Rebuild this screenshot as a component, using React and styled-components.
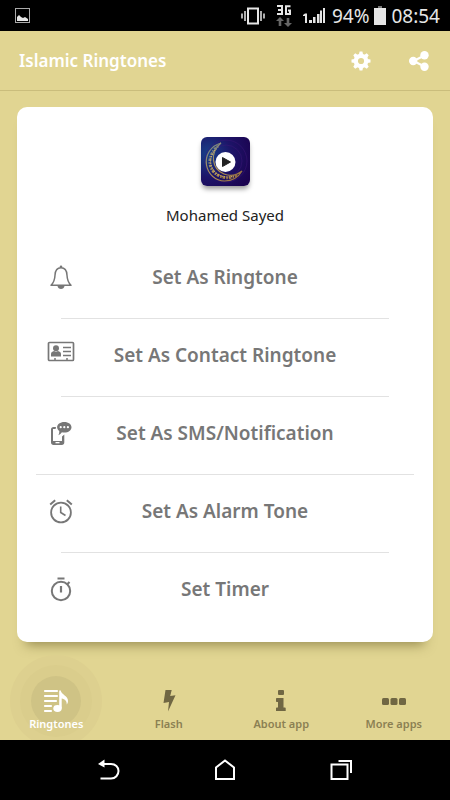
import React, { Component } from 'react';
import styled, { createGlobalStyle } from 'styled-components';

const GlobalStyle = createGlobalStyle`
    * {
        box-sizing: border-box;
    }
    body {
        margin: 0;
        background: #e1d592;
        font-family: "Noto Sans", "Open Sans", sans-serif;
    }
    button {
        border: 0;
        padding: 0;
        background: none;
        font-family: inherit;
        cursor: pointer;
    }
    svg {
        display: block;
        flex: none;
    }
`;

const Page = styled.div`
    display: flex;
    flex-direction: column;
    min-height: 100vh;
    background: #e1d592;
`;

const StatusBar = styled.div`
    display: flex;
    align-items: center;
    justify-content: space-between;
    height: 31px;
    padding: 0 10px 0 15px;
    background: #000;
    color: #e6e6e6;
    font-size: 19px;
    line-height: 30px;
`;

const StatusGroup = styled.div`
    display: flex;
    align-items: center;
    gap: ${props => props.$gap}px;
`;

const Header = styled.header`
    display: flex;
    align-items: center;
    justify-content: space-between;
    height: 60px;
    padding: 0 21px 0 19px;
    border-bottom: 1px solid #cabd7c;
    color: #fff;
    h1 {
        margin: 0;
        font-size: 17px;
        line-height: 24px;
        font-weight: 600;
    }
`;

const Actions = styled.div`
    display: flex;
    gap: 38px;
    button {
        color: #fff;
    }
`;

const Card = styled.main`
    display: flex;
    flex-direction: column;
    align-items: center;
    margin: 16px 17px 0;
    padding: 30px 0 12px;
    border-radius: 10px;
    background: #fff;
    box-shadow: 0 12px 12px -9px rgba(80, 70, 20, 0.5);
`;

const PlayButton = styled.button`
    border-radius: 6px;
    box-shadow: 0 4px 5px -1px rgba(0, 0, 0, 0.4);
`;

const Author = styled.p`
    margin: 16px 0 13px;
    color: #222;
    font-size: 15px;
    line-height: 26px;
`;

const List = styled.ul`
    width: 100%;
    margin: 0;
    padding: 0;
    list-style: none;
`;

const Divider = styled.div`
    height: 1px;
    margin: 0 ${props => props.$wide ? 19 : 44}px;
    background: #e2e2e2;
`;

const Option = styled.button`
    display: grid;
    grid-template-columns: 88px 1fr 88px;
    align-items: center;
    justify-items: center;
    width: 100%;
    height: 77px;
    padding-bottom: 5px;
    color: #777;
    font-size: 19px;
    line-height: 28px;
    font-weight: 600;
    white-space: nowrap;
`;

const Tabs = styled.nav`
    position: relative;
    display: grid;
    grid-template-columns: repeat(4, 1fr);
    align-items: end;
    flex: 1;
    min-height: 98px;
    overflow: hidden;
`;

const Tab = styled.button`
    position: relative;
    display: flex;
    flex-direction: column;
    align-items: center;
    height: 52px;
    color: ${props => props.$selected ? '#fff' : '#8b8053'};
    font-size: 11px;
    line-height: 16px;
    font-weight: 600;
    svg {
        position: relative;
        color: ${props => props.$selected ? '#fff' : '#706743'};
    }
    span {
        position: relative;
        margin-top: 2px;
    }
`;

const Ripple = styled.i`
    position: absolute;
    top: 13px;
    left: 50%;
    width: 50px;
    height: 50px;
    margin: -25px 0 0 -25px;
    border-radius: 50%;
    background: #cfc385;
    box-shadow: 0 0 0 11px #dacd8c, 0 0 0 21px #ddd08f;
`;

const SystemBar = styled.div`
    display: flex;
    align-items: center;
    justify-content: center;
    gap: 94px;
    height: 60px;
    background: #000;
    button {
        color: #fff;
    }
`;

const GearIcon = () => (
    <svg width="20" height="20" viewBox="0 0 20 20" fill="currentColor">
        <circle cx="10" cy="10" r="5.200" fill="none" stroke="currentColor" strokeWidth="4.200" />
        {[0, 45, 90, 135].map(angle => (
            <g key={angle} transform={`rotate(${angle} 10 10)`}>
                <path d="M8.600 0.500h2.800l.7 3h-4.200zM7.900 16.500h4.200l-.7 3H8.600z" />
            </g>
        ))}
    </svg>
);

const BellIcon = () => (
    <svg width="28" height="28" viewBox="0 0 28 28" fill="none" stroke="currentColor" strokeWidth="1.5">
        <path d="M4 22.2c3-2.8 3.8-5.5 4-10C8.200 7.500 10.300 4.800 14 4.800s5.800 2.700 6 7.400c.2 4.500 1 7.200 4 10z" strokeLinejoin="round" />
        <circle cx="14" cy="3.700" r="1.300" fill="currentColor" stroke="none" />
        <path d="M10.500 23h7c-.3 2-1.700 3-3.500 3s-3.200-1-3.500-3z" fill="currentColor" stroke="none" />
    </svg>
);

const ContactIcon = () => (
    <svg width="28" height="28" viewBox="0 0 28 28" fill="none" stroke="currentColor">
        <rect x="1.500" y="1.500" width="25" height="18" rx="1" strokeWidth="1.700" />
        <circle cx="9" cy="7.200" r="3" fill="currentColor" stroke="none" />
        <path d="M4 15.500v-2.500c0-1.800 1.500-2.600 3-3l2 .8 2-.8c1.500.4 3 1.200 3 3v2.500z" fill="currentColor" stroke="none" />
        <path d="M16 6.500h8M16 10.500h8M16 14.500h8" strokeWidth="1.500" />
        <path d="M8 17v2M20 17v2" strokeWidth="1.500" />
    </svg>
);

const SmsIcon = () => (
    <svg width="28" height="28" viewBox="0 0 28 28" fill="currentColor">
        <path d="M9 8H6.500C5 8 4 9 4 10.500v13C4 25 5 26 6.500 26h8.300c1.500 0 2.500-1 2.500-2.500v-8l-2.300 2V22H6V10h2.600z" />
        <rect x="8.500" y="23" width="4" height="1.300" fill="#fff" />
        <path d="M17.300 3c4.200 0 7.200 2.400 7.200 5.300s-3 5.300-7.200 5.300c-.9 0-1.700-.1-2.400-.3-.9 1.300-2 2.300-3.500 3 .7-1.300 1-2.600.9-4.200-1.300-1-2.200-2.300-2.200-3.800C10.100 5.400 13.100 3 17.300 3z" />
        <g fill="#fff">
            <circle cx="13.700" cy="8.200" r="1.100" />
            <circle cx="17.300" cy="8.200" r="1.100" />
            <circle cx="20.900" cy="8.200" r="1.100" />
        </g>
    </svg>
);

const AlarmIcon = () => (
    <svg width="28" height="28" viewBox="0 0 28 28" fill="none" stroke="currentColor">
        <circle cx="14" cy="15.500" r="9.900" strokeWidth="1.800" />
        <path d="M13.700 9.500v6l4.800 3" strokeWidth="1.600" />
        <path d="M3.200 7.500l5-4.200M24.800 7.500l-5-4.200" strokeWidth="2" />
    </svg>
);

const TimerIcon = () => (
    <svg width="28" height="28" viewBox="0 0 28 28" fill="none" stroke="currentColor">
        <circle cx="14" cy="16" r="9.200" strokeWidth="2" />
        <path d="M10.500 3.500h7" strokeWidth="2" />
        <path d="M14 11v6.500" strokeWidth="2.200" />
        <path d="M20 9.500l2.500-2.500" strokeWidth="2.200" />
    </svg>
);

const Artwork = () => (
    <svg width="49" height="49" viewBox="0 0 49 49">
        <defs>
            <radialGradient id="night" cx="0.150" cy="0.350" r="0.950">
                <stop offset="0" stopColor="#17418a" />
                <stop offset="0.500" stopColor="#1d1468" />
                <stop offset="1" stopColor="#1b0350" />
            </radialGradient>
            <linearGradient id="gold" x1="0" y1="0" x2="1" y2="1">
                <stop offset="0" stopColor="#6d8090" />
                <stop offset="0.500" stopColor="#b59650" />
                <stop offset="1" stopColor="#8d6642" />
            </linearGradient>
        </defs>
        <rect width="49" height="49" rx="6" fill="url(#night)" />
        <g fill="none" stroke="#3b1578" strokeOpacity="0.500">
            <circle cx="25" cy="24" r="16" />
            <circle cx="25" cy="24" r="21" />
        </g>
        <path d="M20 6C9 9 4 19 5.500 28c1.500 9 9 16 18 16 8 0 14-4 17.500-10-5 4-12 5.500-18 3C11 32 8 16 20 6z" fill="none" stroke="url(#gold)" strokeWidth="1.200" />
        <path d="M17 9C9 16 6 26 12 34c6 7 16 9 25 4" fill="none" stroke="url(#gold)" strokeWidth="2.800" strokeDasharray="1.500 1 2.500 1.200" />
        <path d="M14 13C7 22 9 30 15 36c5 4 12 5 18 3" fill="none" stroke="#d9bd63" strokeWidth="1" strokeDasharray="1 1.300" />
        <circle cx="24.500" cy="25" r="10" fill="#fff" />
        <path d="M21.500 20.500v9l8-4.500z" fill="#222" stroke="#222" strokeLinejoin="round" />
    </svg>
);

const ShareIcon = () => (
    <svg width="20" height="20" viewBox="0 0 20 20" fill="currentColor">
        <path d="M15.500 4.500L4.500 10l11 5.500" fill="none" stroke="currentColor" strokeWidth="2.200" />
        <circle cx="4.200" cy="10" r="4.200" />
        <circle cx="15.500" cy="4.300" r="4.200" />
        <circle cx="15.500" cy="15.700" r="4.200" />
    </svg>
);

const PlaylistIcon = () => (
    <svg width="26" height="26" viewBox="0 0 26 26" fill="currentColor">
        <path d="M2 3h12M2 8h12M2 13h11M2 18h6M2 23h6" fill="none" stroke="currentColor" strokeWidth="2.200" strokeLinecap="round" />
        <ellipse cx="14.500" cy="20.500" rx="4.200" ry="3.400" />
        <path d="M16.200 2.500h1.600c.5 4 7.500 5.500 7.200 10.500 0 1.500-.5 2.500-1.300 3.500.3-3.500-1.700-5.500-5-6v10h-2.500z" />
    </svg>
);

const FlashIcon = () => (
    <svg width="26" height="26" viewBox="0 0 26 26" fill="currentColor">
        <path d="M9.500 2h6.200l-1.500 6 5.300-.800-7.500 16.300 1-9.500-5.500 1z" />
    </svg>
);

const InfoIcon = () => (
    <svg width="26" height="26" viewBox="0 0 26 26" fill="currentColor">
        <rect x="10" y="2" width="6" height="5" rx="1" />
        <path d="M9 10h6.500v9.500h1.200c.6 0 1 .4 1 1V23H8v-2.500c0-.6.400-1 1-1h1V14H9c-.6 0-1-.4-1-1v-2c0-.6.400-1 1-1z" />
    </svg>
);

const MoreIcon = () => (
    <svg width="26" height="26" viewBox="0 0 26 26" fill="currentColor">
        <rect x="1" y="10" width="7" height="7" rx="1.500" />
        <rect x="9.500" y="10" width="7" height="7" rx="1.500" />
        <rect x="18" y="10" width="7" height="7" rx="1.500" />
    </svg>
);

const PictureIcon = () => (
    <svg width="15" height="15" viewBox="0 0 15 15">
        <rect x="0.500" y="0.500" width="14" height="14" fill="none" stroke="#aaa" />
        <path d="M2 13V9l2-2 2 2 2 1 2-1 3 2v2z" fill="#e6e6e6" />
    </svg>
);

const VibrateIcon = () => (
    <svg width="24" height="18" viewBox="0 0 24 18" fill="none" stroke="#e6e6e6" strokeWidth="1.500">
        <rect x="7" y="1.500" width="10" height="15" strokeWidth="2" />
        <path d="M4 4v10M1 6.500v5M20 4v10M23 6.500v5" />
    </svg>
);

const NetworkIcon = () => (
    <svg width="16" height="22" viewBox="0 0 16 22">
        <path d="M1 1h5v8H1M2 5h4M14.500 1.200H10v7.800h4V5.500h-2" fill="none" stroke="#e6e6e6" strokeWidth="2" />
        <path d="M4 12l4 4H5.300v5H2.700v-5H0zM12 22l-4-4h2.700v-5h2.600v5H16z" fill="#666" />
    </svg>
);

const SignalIcon = () => (
    <svg width="22" height="17" viewBox="0 0 22 17" fill="#e6e6e6">
        <path d="M0 8l2-1.500h2V16H2V9H0zM6 13h3v3H6zM10 10h2.500v6H10zM14 7h2.500v9H14zM17 3.500h2V16h-2zM20 1h2v15h-2z" />
    </svg>
);

const BatteryIcon = () => (
    <svg width="12" height="19" viewBox="0 0 12 19">
        <rect x="4" width="4" height="2" fill="#777" />
        <rect y="2" width="12" height="17" fill="#e6e6e6" />
    </svg>
);

const BackIcon = () => (
    <svg width="22" height="22" viewBox="0 0 22 22" fill="none" stroke="currentColor" strokeWidth="2">
        <path d="M5 5h8c4.500 0 7.500 3 7.500 7s-3 7.500-7.500 7.500H2.500" />
        <path d="M0 5l6.500-4.500v8z" fill="currentColor" stroke="none" />
    </svg>
);

const HomeIcon = () => (
    <svg width="22" height="22" viewBox="0 0 22 22" fill="none" stroke="currentColor" strokeWidth="2">
        <path d="M2 20V8.500L11 1.500l9 7V20z" />
    </svg>
);

const RecentIcon = () => (
    <svg width="22" height="22" viewBox="0 0 22 22" fill="none" stroke="currentColor" strokeWidth="2">
        <rect x="1.500" y="5.500" width="16" height="14.500" />
        <path d="M8.500 2H21v12" />
    </svg>
);

const options = [
    { label: 'Set As Ringtone', icon: <BellIcon /> },
    { label: 'Set As Contact Ringtone', icon: <ContactIcon /> },
    { label: 'Set As SMS/Notification', icon: <SmsIcon />, wide: true },
    { label: 'Set As Alarm Tone', icon: <AlarmIcon /> },
    { label: 'Set Timer', icon: <TimerIcon /> },
];

const tabs = [
    { label: 'Ringtones', icon: <PlaylistIcon /> },
    { label: 'Flash', icon: <FlashIcon /> },
    { label: 'About app', icon: <InfoIcon /> },
    { label: 'More apps', icon: <MoreIcon /> },
];

class App extends Component {

    state = {
        tab: 'Ringtones',
    }

    setTab = (tab) => {
        this.setState({
            tab
        })
    }

    render() {
        return (
            <Page>
                <GlobalStyle />
                <StatusBar>
                    <PictureIcon />
                    <StatusGroup $gap={7}>
                        <StatusGroup $gap={11}>
                            <VibrateIcon />
                            <NetworkIcon />
                            <SignalIcon />
                        </StatusGroup>
                        <StatusGroup $gap={5}>
                            <span>94%</span>
                            <BatteryIcon />
                            <span>08:54</span>
                        </StatusGroup>
                    </StatusGroup>
                </StatusBar>

                <Header>
                    <h1>Islamic Ringtones</h1>
                    <Actions>
                        <button aria-label="Settings"><GearIcon /></button>
                        <button aria-label="Share"><ShareIcon /></button>
                    </Actions>
                </Header>

                <Card>
                    <PlayButton aria-label="Play"><Artwork /></PlayButton>
                    <Author>Mohamed Sayed</Author>
                    <List>
                        {options.map((option, i) => (
                            <li key={option.label}>
                                <Option>
                                    {option.icon}
                                    <span>{option.label}</span>
                                </Option>
                                {i < options.length - 1 && <Divider $wide={option.wide} />}
                            </li>
                        ))}
                    </List>
                </Card>

                <Tabs>
                    {tabs.map(({ label, icon }) => (
                        <Tab key={label} $selected={this.state.tab === label} onClick={() => this.setTab(label)}>
                            {this.state.tab === label && <Ripple />}
                            {icon}
                            <span>{label}</span>
                        </Tab>
                    ))}
                </Tabs>

                <SystemBar>
                    <button aria-label="Back"><BackIcon /></button>
                    <button aria-label="Home"><HomeIcon /></button>
                    <button aria-label="Recent apps"><RecentIcon /></button>
                </SystemBar>
            </Page>
        );
    }
}

export default App;
